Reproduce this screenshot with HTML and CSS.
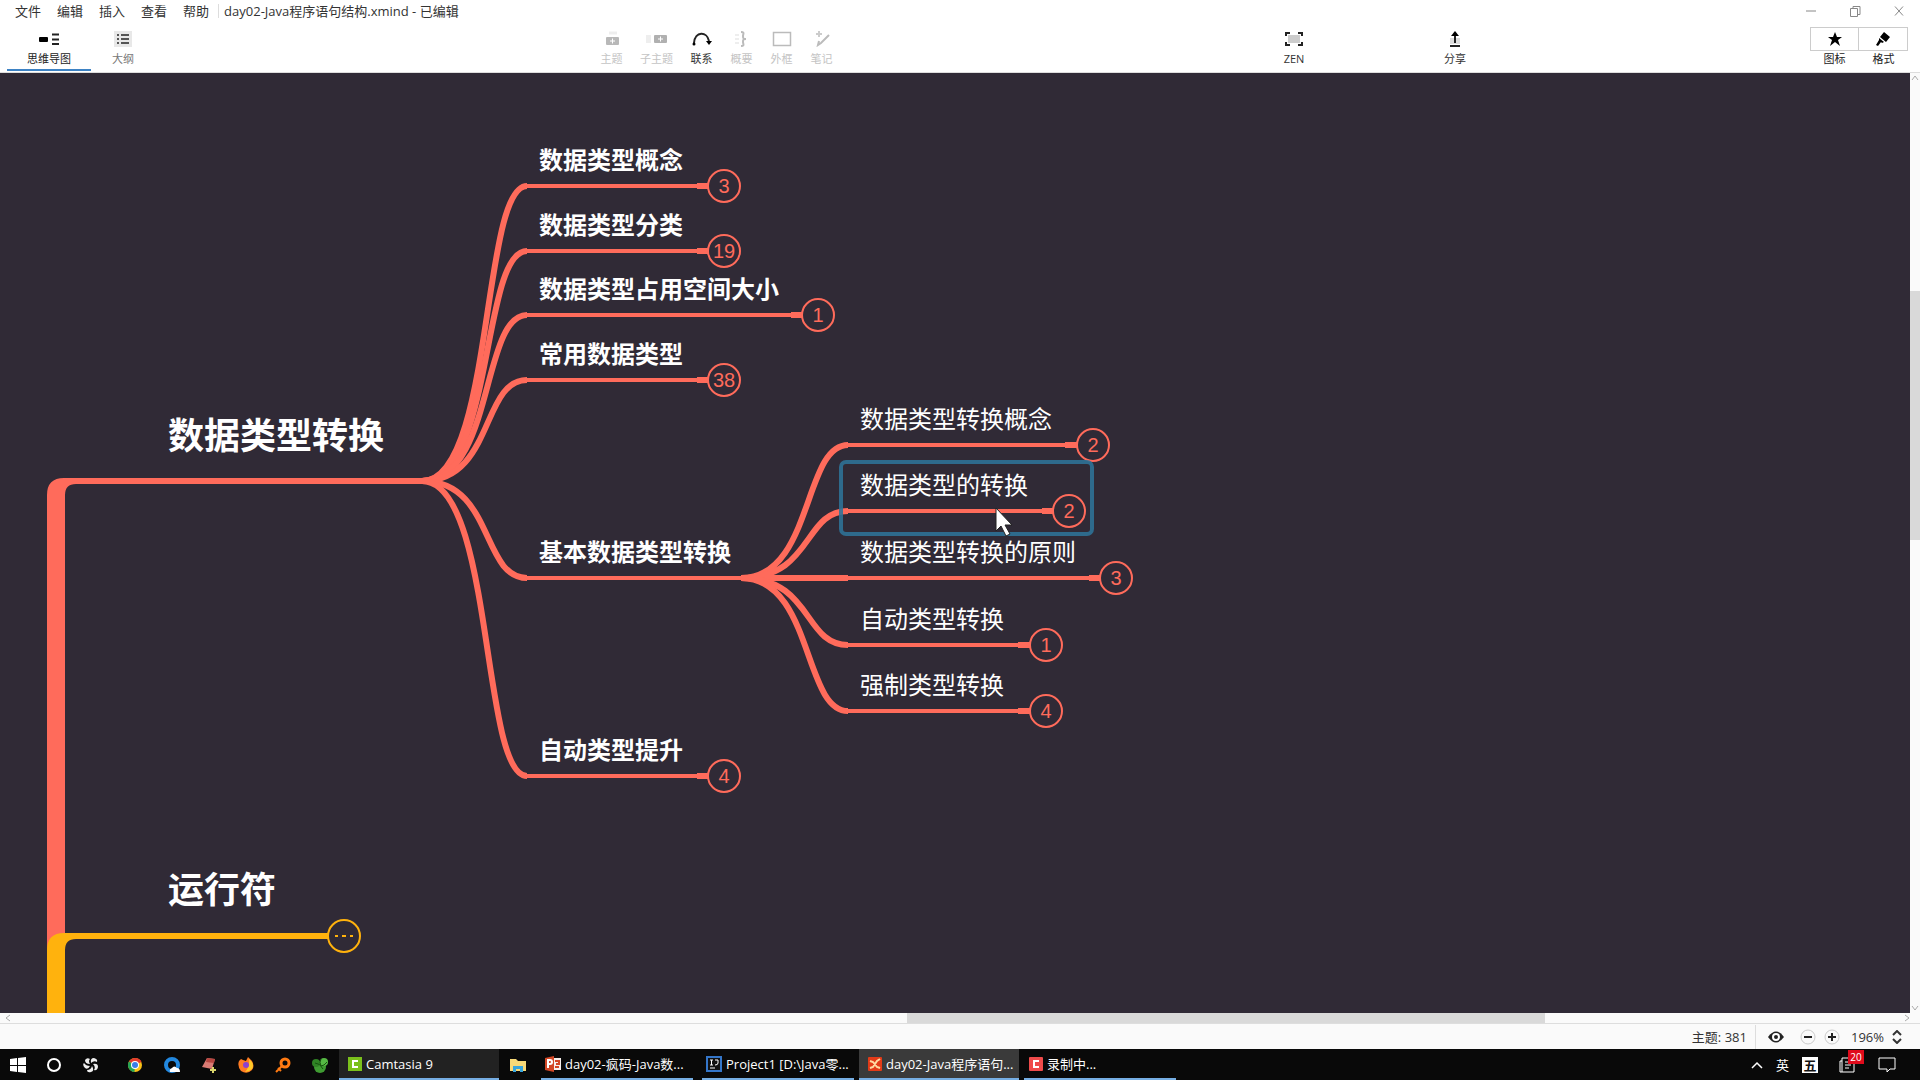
FILE: index.html
```html
<!DOCTYPE html>
<html lang="zh-CN">
<head>
<meta charset="utf-8">
<title>day02-Java程序语句结构.xmind</title>
<link rel="stylesheet" href="styles.css">
</head>
<body>
<div class="app">
  <header class="titlebar">
    <nav class="menu">
      <button>文件</button><button>编辑</button><button>插入</button><button>查看</button><button>帮助</button>
    </nav>
    <h1 class="doc-title">day02-Java程序语句结构.xmind - 已编辑</h1>
    <div class="window-controls">
      <button aria-label="最小化"><svg width="12" height="12" viewBox="0 0 12 12"><path d="M1 6h10"/></svg></button>
      <button aria-label="还原"><svg width="12" height="12" viewBox="0 0 12 12"><path d="M1.500 3.500h7v8h-7zM4 3.500v-2h7v8h-2"/></svg></button>
      <button aria-label="关闭"><svg width="12" height="12" viewBox="0 0 12 12"><path d="M2 1.500l8 9M10 1.500l-8 9"/></svg></button>
    </div>
  </header>

  <div class="toolbar">
    <div class="views">
      <button class="tool view active"><svg width="20" height="16" viewBox="0 0 20 16"><rect x="0" y="6" width="9" height="5" rx="1"/><path d="M13 3.500h7M13 8.500h7M13 13h7" stroke="#222" stroke-width="2"/></svg><span>思维导图</span></button>
      <button class="tool view outline"><svg width="18" height="16" viewBox="0 0 18 16"><rect width="18" height="16" fill="#e8e8e8"/><path d="M3 4h2M7 4h8M3 8h2M7 8h8M3 12h2M7 12h8" stroke="#555" stroke-width="2"/></svg><span>大纲</span></button>
    </div>
    <div class="inserts">
      <button class="tool" disabled><svg width="20" height="16" viewBox="0 0 20 16"><path d="M7 2h8" stroke="#eee" stroke-width="3"/><rect x="4" y="6" width="13" height="8" rx="1" fill="#b8b8b8"/><path d="M10.500 7.500v5M8 10h5" stroke="#fff"/></svg><span>主题</span></button>
      <button class="tool" disabled><svg width="24" height="16" viewBox="0 0 24 16"><rect x="1" y="4" width="5" height="8" fill="#eee"/><rect x="9" y="4" width="13" height="8" rx="1" fill="#b0b0b0"/><path d="M15.500 5.500v5M13 8h5" stroke="#fff"/></svg><span>子主题</span></button>
      <button class="tool"><svg width="20" height="16" viewBox="0 0 20 16"><path d="M2 12C3 0 15 0 17 10" fill="none" stroke="#222" stroke-width="2"/><circle cx="2" cy="13" r="1.500"/><path d="M14 10h6l-3 4z"/></svg><span>联系</span></button>
      <button class="tool" disabled><svg width="20" height="16" viewBox="0 0 20 16"><path d="M3 4h4M3 8h4M3 12h4" stroke="#eee" stroke-width="2"/><path d="M9 1c4 0 2 2 2 4s0 3 3 3c-3 0-3 1-3 3s2 4-2 4" fill="none" stroke="#bbb" stroke-width="2"/></svg><span>概要</span></button>
      <button class="tool" disabled><svg width="20" height="16" viewBox="0 0 20 16"><rect x="1.500" y="1.500" width="17" height="13" fill="none" stroke="#bbb" stroke-width="1.500"/></svg><span>外框</span></button>
      <button class="tool" disabled><svg width="20" height="16" viewBox="0 0 20 16"><path d="M17 4l-8 8-3 2 1-4" fill="none" stroke="#bbb" stroke-width="2"/><path d="M4 3h6M7 0v6" stroke="#ccc" stroke-width="2"/></svg><span>笔记</span></button>
    </div>
    <button class="tool zen"><svg width="20" height="16" viewBox="0 0 20 16"><rect x="4" y="4" width="12" height="8" fill="#ccc"/><path d="M2 5V2h4M14 2h4v3M18 11v3h-4M6 14H2v-3" fill="none" stroke="#222" stroke-width="2"/></svg><span>ZEN</span></button>
    <button class="tool share"><svg width="16" height="16" viewBox="0 0 16 16"><rect x="3" y="7" width="10" height="6" fill="#ddd"/><path d="M8 12V3M3 15h10" stroke="#222" stroke-width="2"/><path d="M4 5l4-5 4 5z"/></svg><span>分享</span></button>
    <div class="panels">
      <button class="panel-tab"><i><svg width="16" height="16" viewBox="0 0 16 16"><path d="M8 1l2 5h5l-4 3 2 6-5-4-5 4 2-6-4-3h5z"/></svg></i><span>图标</span></button>
      <button class="panel-tab"><i><svg width="16" height="16" viewBox="0 0 16 16"><path d="M9 1l6 5-4 5-6-5zM4 7l5 4-2 1-1-1-3 4-2-1 3-5z"/></svg></i><span>格式</span></button>
    </div>
  </div>

  <main class="workspace">
    <div class="canvas">
      <svg class="links" width="1900" height="940" viewBox="0 0 1900 940">
        <g transform="translate(0 -73)" fill="none" stroke="#ff6b5b">
          <path d="M47 1013V495Q47 478 64 478H424V484H76Q65 484 65 495V1013Z" fill="#ff6b5b" stroke="none"/>
          <path d="M47 1013V950Q47 933 64 933H328V939H76Q65 939 65 950V1013Z" fill="#ffb20d" stroke="none"/>
          <g stroke-width="6">
            <path d="M422 481C494 481 481 186 527 186"/>
            <path d="M422 481C494 481 481 251 527 251"/>
            <path d="M422 481C494 481 481 315 527 315"/>
            <path d="M422 481C494 481 481 380 527 380"/>
            <path d="M422 481C494 481 481 578 527 578"/>
            <path d="M422 481C494 481 481 776 527 776"/>
          </g>
          <g stroke-width="6">
            <path d="M741 578C813 578 803 445 848 445"/>
            <path d="M741 578C813 578 803 511 848 511"/>
            <path d="M760 578H848"/>
            <path d="M741 578C813 578 803 645 848 645"/>
            <path d="M741 578C813 578 803 711 848 711"/>
          </g>
          <path stroke-width="4" d="M526 186H708M526 251H708M526 315H802M526 380H708M526 578H762M526 776H708M847 445H1077M847 511H1053M847 578H1100M847 645H1030M847 711H1030"/>
          <path stroke-width="6" d="M697 186H709M697 251H709M791 315H803M697 380H709M697 776H709M1065 445H1077M1042 511H1054M1089 578H1101M1018 645H1030M1018 711H1030"/>
        </g>
      </svg>
      <div class="topic main t-convert">数据类型转换</div>
      <div class="topic main t-operator">运行符</div>
      <button class="count more c-operator" aria-label="展开"><svg width="20" height="4" viewBox="0 0 20 4"><path d="M1 2h3M8 2h4M16 2h3" stroke="#ffb20d" stroke-width="2"/></svg></button>

      <div class="topic sub t-concept">数据类型概念</div><button class="count c-concept">3</button>
      <div class="topic sub t-class">数据类型分类</div><button class="count c-class">19</button>
      <div class="topic sub t-size">数据类型占用空间大小</div><button class="count c-size">1</button>
      <div class="topic sub t-common">常用数据类型</div><button class="count c-common">38</button>
      <div class="topic sub t-basic">基本数据类型转换</div>
      <div class="topic sub t-promote">自动类型提升</div><button class="count c-promote">4</button>

      <div class="topic leaf t-idea">数据类型转换概念</div><button class="count c-idea">2</button>
      <div class="topic leaf t-change">数据类型的转换</div><button class="count c-change">2</button>
      <div class="topic leaf t-rule">数据类型转换的原则</div><button class="count c-rule">3</button>
      <div class="topic leaf t-auto">自动类型转换</div><button class="count c-auto">1</button>
      <div class="topic leaf t-force">强制类型转换</div><button class="count c-force">4</button>

      <div class="selection"></div>
      <svg class="cursor" width="18" height="30" viewBox="0 0 18 30"><path d="M1 1v23l5-5 5 10 4-2-5-9h7z" fill="#fff" stroke="#222"/></svg>
    </div>
    <div class="vscroll">
      <svg width="10" height="10" viewBox="0 0 10 10"><path d="M2 7l3-4 3 4"/></svg>
      <div class="vtrack"><div class="vthumb"></div></div>
      <svg width="10" height="10" viewBox="0 0 10 10"><path d="M2 3l3 4 3-4"/></svg>
    </div>
  </main>
  <div class="hscroll">
    <svg width="10" height="10" viewBox="0 0 10 10"><path d="M7 2L3 5l4 3"/></svg>
    <div class="htrack"><div class="hthumb"></div></div>
    <svg width="10" height="10" viewBox="0 0 10 10"><path d="M3 2l4 3-4 3"/></svg>
  </div>

  <footer class="status">
    <span class="total">主题: 381</span>
    <button class="eye" aria-label="显示"><svg width="16" height="12" viewBox="0 0 16 12"><path d="M0 6Q8-5 16 6Q8 17 0 6Z" fill="#222"/><circle cx="8" cy="6" r="3" fill="none" stroke="#fff" stroke-width="2"/></svg></button>
    <button aria-label="缩小"><svg width="16" height="16" viewBox="0 0 16 16"><circle cx="8" cy="8" r="7" fill="none" stroke="#ccc"/><path d="M4 8h8" stroke="#222" stroke-width="2"/></svg></button>
    <button aria-label="放大"><svg width="16" height="16" viewBox="0 0 16 16"><circle cx="8" cy="8" r="7" fill="none" stroke="#ccc"/><path d="M4 8h8M8 4v8" stroke="#222" stroke-width="2"/></svg></button>
    <button class="zoom">196%<svg width="10" height="14" viewBox="0 0 10 14"><path d="M1 5l4-4 4 4M1 9l4 4 4-4" fill="none" stroke="#333" stroke-width="2"/></svg></button>
  </footer>

  <div class="taskbar">
    <div class="pins">
      <button aria-label="开始"><svg width="16" height="16" viewBox="0 0 16 16" fill="#fff"><path d="M0 2l7-1v7H0zM8 1l8-1v8H8zM0 9h7v6l-7-1zM8 9h8v7l-8-1z"/></svg></button>
      <button aria-label="搜索"><svg width="16" height="16" viewBox="0 0 16 16"><circle cx="8" cy="8" r="6" fill="none" stroke="#fff" stroke-width="2"/></svg></button>
      <button class="fan" aria-label="风扇"><svg width="16" height="16" viewBox="0 0 16 16" fill="#eee"><path d="M7 7Q2 7 2 3 4 0 7 2 5 4 7 7z"/><path d="M8 6Q7 1 11 1q4 1 3 4-3-2-6 1z"/><path d="M10 7q5-1 5 3-1 4-4 3 2-3-1-6z"/><path d="M9 9q3 5-1 6-4 1-4-2 4 0 5-4z"/><path d="M7 9Q5 13 2 11-1 8 1 6q2 3 6 3z"/></svg></button>
      <button aria-label="Chrome"><svg width="16" height="16" viewBox="0 0 16 16"><circle cx="8" cy="8" r="7" fill="#fbc116"/><path d="M8 8L2 4.500A7 7 0 0 1 14.500 5z" fill="#e33b2e"/><path d="M8 8L1.900 4.500A7 7 0 0 0 7.500 15z" fill="#23a455"/><circle cx="8" cy="8" r="4" fill="#fff"/><circle cx="8" cy="8" r="3" fill="#3b7de8"/></svg></button>
      <button aria-label="QQ浏览器"><svg width="16" height="16" viewBox="0 0 16 16"><circle cx="8" cy="8" r="6" fill="none" stroke="#2288df" stroke-width="4"/><path d="M6 15q-1-3 2-4 2-3 5 0 3 0 3 4z" fill="#fff"/></svg></button>
      <button aria-label="画图"><svg width="16" height="16" viewBox="0 0 16 16"><path d="M1 10L6 1l8 1-3 10z" fill="#d97b74"/><path d="M6 1l8 1-1 4-8-1z" fill="#b74640"/><path d="M9 13h6M12 10v6" stroke="#d9d56b" stroke-width="2"/></svg></button>
      <button aria-label="Firefox"><svg width="16" height="16" viewBox="0 0 16 16"><path d="M1 4l2-2 2 1 3 1 2-4 4 4q3 5 0 9-5 5-11 1-4-5-2-10z" fill="#ff7b22"/><path d="M11 2q6 5 3 10-3 3-7 3 5-5 4-13z" fill="#ffc928"/><circle cx="8" cy="8" r="3" fill="#8b42cf"/></svg></button>
      <button aria-label="查找"><svg width="16" height="16" viewBox="0 0 16 16"><circle cx="10" cy="6" r="4" fill="none" stroke="#ff7a12" stroke-width="3"/><path d="M7 9l-6 6M3 11l3 3" stroke="#ff7a12" stroke-width="2"/></svg></button>
      <button aria-label="工具"><svg width="16" height="16" viewBox="0 0 16 16"><circle cx="8" cy="10" r="6" fill="#3f9b32"/><circle cx="4" cy="6" r="4" fill="#2f8325"/><circle cx="12" cy="5" r="4" fill="#56b944"/><path d="M3 6q5 0 8 6M9 2q-2 3 0 7 3 0 6-4" fill="none" stroke="#17530f"/></svg></button>
    </div>
    <button class="task camtasia"><svg width="14" height="14" viewBox="0 0 14 14"><rect width="14" height="14" fill="#7bc11c"/><path d="M10 4H5v6h5" fill="none" stroke="#fff" stroke-width="2"/></svg><span>Camtasia 9</span></button>
    <button class="folder" aria-label="资源管理器"><svg width="16" height="14" viewBox="0 0 16 14"><path d="M0 1h6l2 2h8v10H0z" fill="#f8d978"/><path d="M3 14V8h10v6h-3v-3H6v3z" fill="#39a5dc"/></svg></button>
    <button class="task ppt"><svg width="16" height="16" viewBox="0 0 16 16"><path d="M0 2l9-2v16l-9-2z" fill="#d24726"/><rect x="9" y="2" width="7" height="12" fill="#f6efec"/><path d="M3 12V4h2q2 0 2 2t-2 2H3" fill="none" stroke="#fff" stroke-width="2"/><path d="M10 5h4v3h-3M10 11h4" fill="none" stroke="#d24726" stroke-width="2"/></svg><span>day02-疯码-Java数...</span></button>
    <button class="task idea"><svg width="16" height="16" viewBox="0 0 16 16"><rect x="1" y="1" width="14" height="14" fill="#111" stroke="#3476c9" stroke-width="2"/><path d="M4 4h3M5.500 4v5M4 9h3M9 4h3v3q0 2-3 2M4 12h5" fill="none" stroke="#fff"/></svg><span>Project1 [D:\Java零...</span></button>
    <button class="task xmind current"><svg width="14" height="16" viewBox="0 0 14 16"><rect y="1" width="14" height="14" rx="1" fill="#e23b18"/><path d="M2 5l3 1 4 5 3 1M12 3L9 5l-4 6-3 1" fill="none" stroke="#ffd9a0" stroke-width="2"/></svg><span>day02-Java程序语句...</span></button>
    <button class="task record"><svg width="14" height="14" viewBox="0 0 14 14"><rect width="14" height="14" rx="1" fill="#ef4b4b"/><path d="M10 4H5v6h5" fill="none" stroke="#fff" stroke-width="2"/></svg><span>录制中...</span></button>
    <div class="tray">
      <button aria-label="更多图标"><svg width="12" height="8" viewBox="0 0 12 8"><path d="M1 7l5-5 5 5" fill="none" stroke="#fff" stroke-width="1.500"/></svg></button>
      <button>英</button>
      <button><b class="wubi">五</b></button>
      <button class="news" aria-label="消息"><svg width="16" height="16" viewBox="0 0 16 16"><path d="M3 1h12v14H1V4h2zM3 4v11M6 5h6M6 8h6M6 11h4" fill="none" stroke="#fff"/></svg><em>20</em></button>
      <button aria-label="通知"><svg width="18" height="16" viewBox="0 0 18 16"><path d="M1 1h16v11h-5l-3 3v-3H1z" fill="none" stroke="#fff"/></svg></button>
    </div>
  </div>
</div>
</body>
</html>
```
FILE: styles.css
```css
* { box-sizing: border-box; }
body { margin: 0; font-family: "Open Sans", "Noto Sans CJK SC", sans-serif; font-size: 13px; color: #333; background: #fff; }
button { border: 0; padding: 0; margin: 0; background: none; font: inherit; color: inherit; display: flex; align-items: center; justify-content: center; }
svg { display: block; flex: none; }
.app { display: flex; flex-direction: column; height: 100vh; overflow: hidden; }

/* title bar */
.titlebar { display: flex; align-items: center; height: 24px; padding: 0 15px 2px; flex: none; }
.menu { display: flex; gap: 16px; padding-right: 9px; border-right: 1px solid #ddd; line-height: 14px; }
.menu button { line-height: 14px; }
.doc-title { margin: 0 auto 0 5px; font-size: 13px; font-weight: 400; line-height: 20px; }
.window-controls { display: flex; gap: 32px; fill: none; stroke: #888; }

/* toolbar */
.toolbar { display: grid; grid-template-columns: 600px 1fr 60px 101px 60px 435px; height: 49px; flex: none; border-bottom: 1px solid #ddd; }
.tool { flex-direction: column; justify-content: flex-start; gap: 4px; padding-top: 7px; font-size: 11px; line-height: 16px; height: 47px; }
.tool:disabled { color: #c4c4c4; }
.views { display: flex; padding-left: 7px; }
.view { width: 84px; }
.view.active { border-bottom: 2px solid #3d82c4; color: #222; }
.view.outline { width: 64px; color: #777; }
.inserts { display: flex; gap: 17px; }
.inserts .tool { min-width: 23px; }
.zen { grid-column: 3; }
.share { grid-column: 5; }
.panels { display: flex; justify-content: flex-end; padding: 3px 12px 0 0; }
.panel-tab { flex-direction: column; justify-content: flex-start; width: 49px; font-size: 11px; line-height: 16px; color: #222; }
.panel-tab i { display: flex; align-items: center; justify-content: center; width: 100%; height: 24px; border: 1px solid #ccc; }
.panel-tab + .panel-tab i { border-left: 0; }

/* map */
.workspace { display: flex; flex: 1; min-height: 0; }
.canvas { position: relative; flex: 1; background: #302a36; overflow: hidden; }
.links { position: absolute; left: 0; top: 0; }
.topic { position: absolute; color: #fff; white-space: nowrap; }
.main { left: 168px; font-size: 36px; font-weight: 700; line-height: 48px; }
.sub { left: 539px; font-size: 24px; font-weight: 700; line-height: 32px; }
.leaf { left: 860px; font-size: 24px; line-height: 32px; }
.t-convert { top: 339px; }
.t-operator { top: 793px; }
.t-concept { top: 71px; }
.t-class { top: 136px; }
.t-size { top: 200px; }
.t-common { top: 265px; }
.t-basic { top: 463px; }
.t-promote { top: 661px; }
.t-idea { top: 330px; }
.t-change { top: 396px; }
.t-rule { top: 463px; }
.t-auto { top: 530px; }
.t-force { top: 596px; }
.count { position: absolute; width: 34px; height: 34px; border: 2px solid #ff6b5b; border-radius: 50%; background: #302a36; color: #ff6b5b; font: 20px/30px "Liberation Sans", sans-serif; }
.count.more { border-color: #ffb20d; }
.c-operator { left: 327px; top: 846px; }
.c-concept, .c-class, .c-common, .c-promote { left: 707px; }
.c-concept { top: 96px; }
.c-class { top: 161px; }
.c-size { left: 801px; top: 225px; }
.c-common { top: 290px; }
.c-promote { top: 686px; }
.c-idea { left: 1076px; top: 355px; }
.c-change { left: 1052px; top: 421px; }
.c-rule { left: 1099px; top: 488px; }
.c-auto, .c-force { left: 1029px; }
.c-auto { top: 555px; }
.c-force { top: 621px; }
.selection { position: absolute; left: 839px; top: 387px; width: 255px; height: 76px; border: 4px solid #2e7398e0; border-radius: 7px; }
.cursor { position: absolute; left: 995px; top: 434px; }

/* scroll bars */
.vscroll, .hscroll { background: #fafafa; fill: none; stroke: #aaa; display: flex; }
.vscroll { width: 10px; flex-direction: column; }
.vtrack { flex: 1; display: grid; grid-template-rows: 208fr 249fr 463fr; }
.vthumb { grid-row: 2; background: #d9d9d9; }
.hscroll { height: 11px; flex: none; border-bottom: 1px solid #ddd; padding: 0 8px 0 3px; }
.htrack { flex: 1; display: grid; grid-template-columns: 894fr 638fr 357fr; }
.hthumb { grid-column: 2; background: #d9d9d9; }

/* status bar */
.status { display: flex; align-items: center; justify-content: flex-end; height: 25px; flex: none; background: #fafafa; padding-right: 18px; gap: 8px; }
.total { padding-right: 8px; border-right: 1px solid #ddd; line-height: 24px; }
.eye { margin: 0 8px 0 4px; }
.zoom { gap: 8px; margin-left: 3px; }

/* task bar */
.taskbar { display: flex; height: 31px; flex: none; background: #090909; color: #fff; }
.pins { display: flex; width: 339px; padding-left: 9px; }
.pins button { width: 37px; padding-right: 1px; }
.pins button:first-child { width: 18px; margin-right: 9px; }
.pins .fan { margin-right: 7px; }
.task { justify-content: flex-start; gap: 4px; white-space: nowrap; border-bottom: 2px solid #76aee3; font-size: 13px; }
.camtasia { width: 160px; padding-left: 9px; background: #222; }
.folder { width: 42px; padding-right: 4px; }
.ppt { width: 152px; padding-left: 4px; margin-right: 9px; }
.idea { width: 152px; padding-left: 4px; margin-right: 5px; }
.xmind { width: 160px; padding-left: 9px; margin-right: 5px; }
.current { background: #3a3a3a; }
.record { width: 152px; padding-left: 5px; }
.tray { display: flex; margin-left: auto; padding-right: 24px; gap: 13px; }
.wubi { width: 16px; height: 16px; background: #fff; color: #111; font-size: 13px; line-height: 16px; }
.news { position: relative; margin: 0 10px 0 8px; }
.news em { position: absolute; left: 9px; top: 1px; width: 16px; background: #e00b1c; font-size: 10px; font-style: normal; line-height: 14px; }
```
